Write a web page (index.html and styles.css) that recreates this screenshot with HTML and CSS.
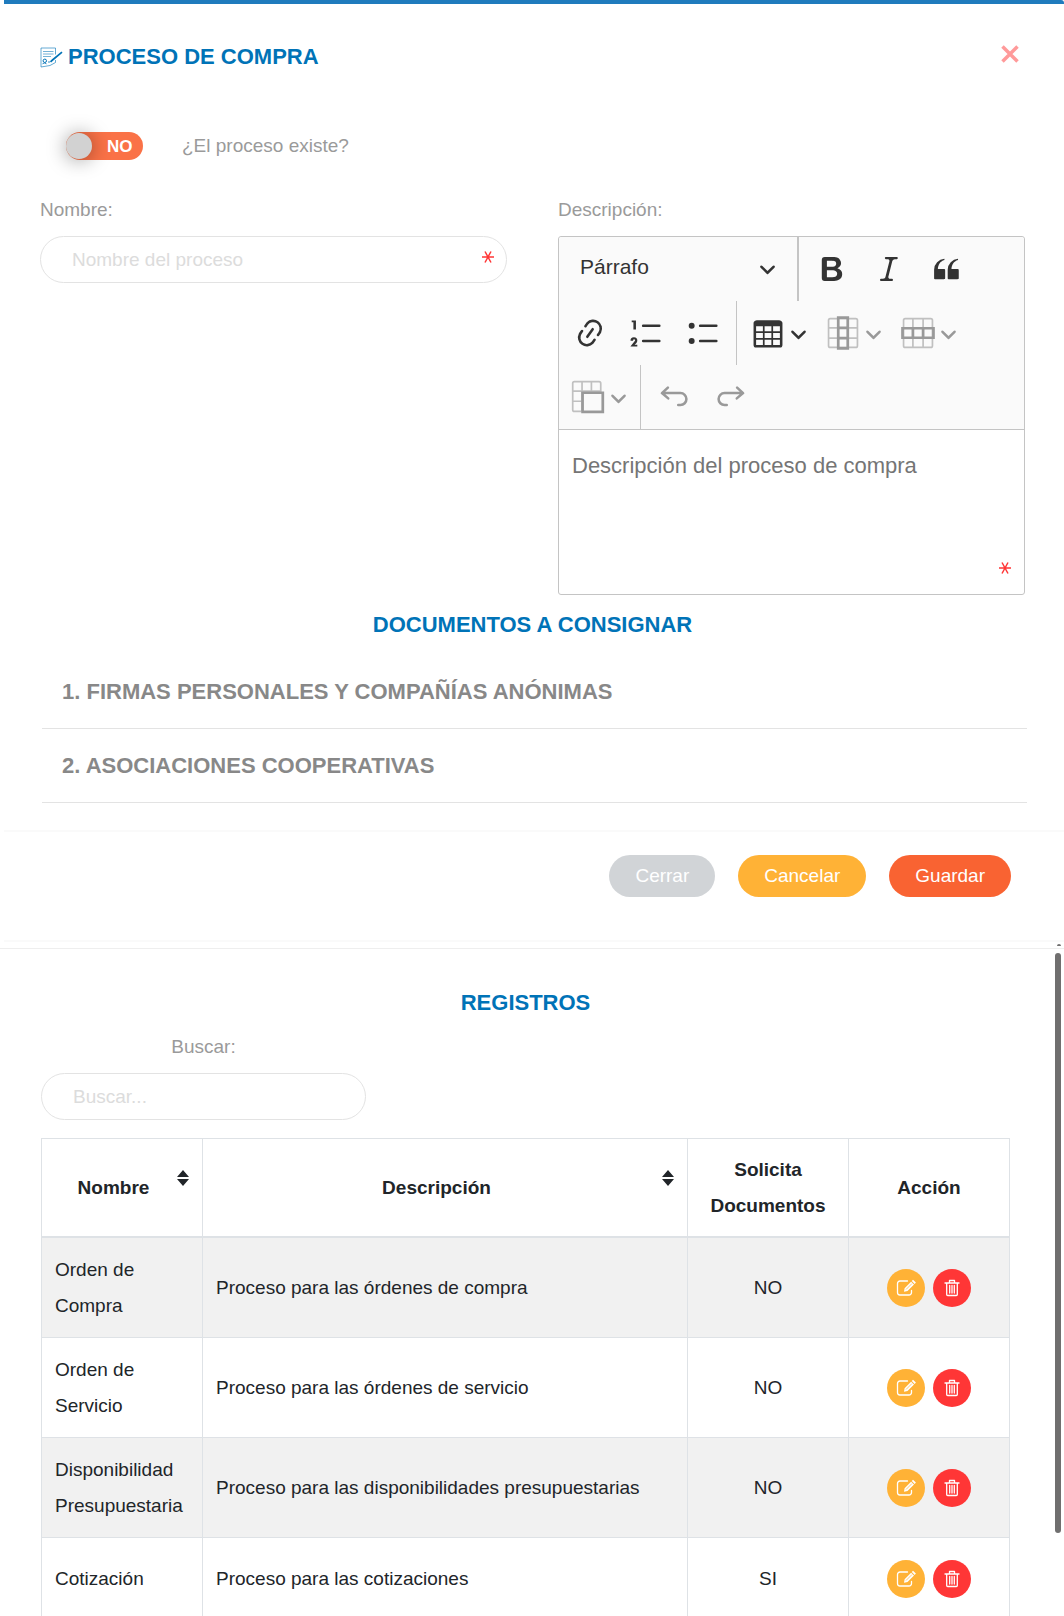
FILE: index.html
```html
<!DOCTYPE html>
<html lang="es">
<head>
<meta charset="utf-8">
<meta name="viewport" content="width=device-width, initial-scale=1">
<title>Proceso de compra</title>
<link rel="stylesheet" href="styles.css">
</head>
<body>
<svg class="sprite" aria-hidden="true">
  <symbol id="i-arrow" viewBox="0 0 10 10"><path d="M.941 4.523a.75.75 0 1 1 1.06-1.06l3.006 3.005 3.005-3.005a.75.75 0 1 1 1.06 1.06l-3.549 3.55a.75.75 0 0 1-1.168-.136L.941 4.523z"/></symbol>
  <symbol id="i-undo" viewBox="0 0 20 20"><path d="M6.4 4.5 2.900 7.700l3.700 3.100M3.200 7.700h10.600a3.500 3.500 0 0 1 0 7h-1.300" fill="none" stroke="currentColor" stroke-width="1.500" stroke-linecap="round" stroke-linejoin="round"/></symbol>
  <symbol id="i-star" viewBox="0 0 14 14"><path d="M1 7h12M4 1.5l6 11M10 1.5l-6 11" fill="none" stroke="currentColor" stroke-width="1.500"/></symbol>
  <symbol id="i-sort" viewBox="0 0 12 16"><path d="M6 0l6 7H0zM6 16l6-7H0z"/></symbol>
  <symbol id="i-edit" viewBox="0 0 20 18"><path d="M11.500 2H4a2.500 2.500 0 0 0-2.500 2.500v9A2.500 2.500 0 0 0 4 16h9a2.500 2.500 0 0 0 2.500-2.500v-2" fill="none" stroke="currentColor" stroke-width="1.300" stroke-linecap="round"/><path d="M8 12.800l.6-3.600 6.500-6.500 2.900 2.900-6.500 6.500zM15.800 2l1.200-1.200 2.900 2.800-1.200 1.300z"/><path d="M10 10.500l6-6" stroke="#ffb236" stroke-width=".7"/></symbol>
  <symbol id="i-trash" viewBox="0 0 16 18"><path d="M1 4h14M5.500 3.800V1.500h5v2.300M2.700 4v11.500a1 1 0 0 0 1 1h8.600a1 1 0 0 0 1-1V4M5.700 6.500v7.500M8 6.500v7.500M10.300 6.500v7.500" fill="none" stroke="currentColor" stroke-width="1.300" stroke-linecap="round" stroke-linejoin="round"/></symbol>
</svg>

<main class="page">
  <section class="card">
    <header class="card-head">
      <h1 class="title">
        <svg class="title-icon line" viewBox="0 0 23 21" stroke="currentColor" aria-hidden="true">
          <path d="M15.500 7.500V1H1v19l9-1.500 5.500-3V13" opacity=".6"/>
          <path d="M3 4.500h10.500M3 7h10.500M3 9.500h8" opacity=".55"/>
          <circle cx="4.800" cy="13.800" r="1.700"/><path d="M2.500 16.800l2-.8 2 .8M8 15h2" opacity=".8"/>
          <path d="M22 5.200L12.500 13l-2 1.800" stroke-width="1.700"/>
        </svg>
        PROCESO DE COMPRA
      </h1>
      <button class="close" type="button" aria-label="Cerrar ventana">
        <svg viewBox="0 0 18 18" aria-hidden="true"><path d="M1.500 1.500l15 15M16.500 1.500l-15 15" stroke="currentColor" stroke-width="3.500"/></svg>
      </button>
    </header>

    <form class="form" id="proceso">
      <div class="switch-row">
        <span class="switch"><input type="checkbox" id="existe"><span class="switch-text" aria-hidden="true">NO</span></span>
        <label for="existe">¿El proceso existe?</label>
      </div>
      <div class="columns">
        <div class="field">
          <label for="nombre">Nombre:</label>
          <div class="control">
            <input class="input" id="nombre" type="text" placeholder="Nombre del proceso">
            <svg class="required" aria-hidden="true"><use href="#i-star"/></svg>
          </div>
        </div>
        <div class="field">
          <label for="descripcion">Descripción:</label>
          <div class="control editor">
            <div class="toolbar">
              <div class="tool-row">
                <span class="style-picker">
                  <select aria-label="Estilo"><option>Párrafo</option></select>
                  <svg class="arrow" aria-hidden="true"><use href="#i-arrow"/></svg>
                </span>
                <span class="sep strong"></span>
                <button class="tool" type="button" aria-label="Negrita"><svg viewBox="0 0 20 20"><path fill-rule="evenodd" d="M10.187 17H5.773c-.637 0-1.092-.138-1.364-.415-.273-.277-.409-.718-.409-1.323V4.738c0-.617.14-1.062.419-1.332.279-.27.73-.406 1.354-.406h4.680c.69 0 1.288.041 1.793.124.506.083.96.242 1.360.478.341.197.644.447.906.75a3.262 3.262 0 0 1 .808 2.162c0 1.401-.722 2.426-2.167 3.075C15.050 10.175 16 11.315 16 13.010a3.756 3.756 0 0 1-2.296 3.504 6.100 6.100 0 0 1-1.517.377c-.571.073-1.238.11-2 .11zm-.217-6.217H7v4.087h3.069c1.977 0 2.965-.69 2.965-2.072 0-.707-.256-1.220-.768-1.537-.512-.319-1.277-.478-2.296-.478zM7 5.130v3.619h2.606c.729 0 1.292-.067 1.690-.2a1.600 1.600 0 0 0 .910-.765c.165-.267.247-.566.247-.897 0-.707-.260-1.176-.778-1.409-.519-.232-1.310-.348-2.375-.348H7z"/></svg></button>
                <button class="tool" type="button" aria-label="Cursiva"><svg viewBox="0 0 20 20"><path d="m9.586 14.633.021.004c-.036.335.095.655.393.962.082.083.173.15.274.201h1.474a.6.6 0 1 1 0 1.200H5.304a.6.6 0 0 1 0-1.200h1.150c.474-.07.809-.182 1.005-.334.157-.122.291-.32.404-.597l2.416-9.550a1.053 1.053 0 0 0-.281-.823 1.120 1.120 0 0 0-.442-.296H8.150a.6.6 0 0 1 0-1.200h6.443a.6.6 0 1 1 0 1.200h-1.195c-.376.056-.65.155-.823.296-.215.175-.423.439-.623.79l-2.366 9.347z"/></svg></button>
                <button class="tool" type="button" aria-label="Cita"><svg viewBox="0 0 20 20"><path d="M3 10.423a6.500 6.500 0 0 1 6.056-6.408l.038.67C6.448 5.423 5.354 7.663 5.220 10H9c.552 0 .5.432.5.986v4.511c0 .554-.448.503-1 .503h-5c-.552 0-.5-.449-.5-1.003v-4.574zm8 0a6.500 6.500 0 0 1 6.056-6.408l.038.67c-2.646.739-3.740 2.979-3.873 5.315H17c.552 0 .5.432.5.986v4.511c0 .554-.448.503-1 .503h-5c-.552 0-.5-.449-.5-1.003v-4.574z"/></svg></button>
              </div>
              <div class="tool-row">
                <button class="tool" type="button" aria-label="Enlace"><svg viewBox="0 0 20 20"><path d="m11.077 15 .991-1.416a.75.75 0 1 1 1.229.86l-1.148 1.640a.748.748 0 0 1-.217.206 5.251 5.251 0 0 1-8.503-5.955.741.741 0 0 1 .12-.274l1.147-1.639a.75.75 0 1 1 1.228.86L4.933 10.700l.006.003a3.750 3.750 0 0 0 6.132 4.294l.006.004zm5.494-5.335a.748.748 0 0 1-.12.274l-1.147 1.639a.75.75 0 1 1-1.228-.86l.86-1.230a3.750 3.750 0 0 0-6.144-4.301l-.86 1.229a.75.75 0 0 1-1.229-.86l1.148-1.640a.748.748 0 0 1 .217-.206 5.251 5.251 0 0 1 8.503 5.955zm-4.563-2.532a.75.75 0 0 1 .184 1.045l-3.155 4.505a.75.75 0 1 1-1.229-.86l3.155-4.506a.75.75 0 0 1 1.045-.184z"/></svg></button>
                <button class="tool" type="button" aria-label="Lista numerada"><svg viewBox="0 0 20 20"><path d="M7 5.750c0 .414.336.75.75.75h9.500a.75.75 0 1 0 0-1.500h-9.500a.75.75 0 0 0-.75.75zM3.500 3v5H2V3.700H1v-1h2.500V3zM.343 17.857l2.590-3.257H2.920a.6.6 0 1 0-1.040 0H.302a2 2 0 1 1 3.995 0h-.001c-.048.405-.16.734-.333.988-.175.254-.59.692-1.244 1.312H4.300v1h-4l.043-.043zM7 14.750a.75.75 0 0 1 .75-.75h9.500a.75.75 0 1 1 0 1.500h-9.500a.75.75 0 0 1-.75-.75z"/></svg></button>
                <button class="tool" type="button" aria-label="Lista de puntos"><svg viewBox="0 0 20 20"><path d="M7 5.750c0 .414.336.75.75.75h9.500a.75.75 0 1 0 0-1.500h-9.500a.75.75 0 0 0-.75.75zM7 14.750c0 .414.336.75.75.75h9.500a.75.75 0 1 0 0-1.500h-9.500a.75.75 0 0 0-.75.75z"/><circle cx="2.750" cy="5.750" r="1.750"/><circle cx="2.750" cy="14.750" r="1.750"/></svg></button>
                <span class="sep"></span>
                <button class="tool drop" type="button" aria-label="Tabla"><svg viewBox="0 0 20 20"><path fill-rule="evenodd" d="M3 6v3h4V6H3zm0 4v3h4v-3H3zm0 4v3h4v-3H3zm5 3h4v-3H8v3zm5 0h4v-3h-4v3zm4-4v-3h-4v3h4zm0-4V6h-4v3h4zm1.500 8a1.500 1.500 0 0 1-1.500 1.500H3A1.500 1.500 0 0 1 1.500 17V4c.222-.863 1.068-1.500 2-1.500h13c.932 0 1.778.637 2 1.500v13zM12 13v-3H8v3h4zm0-4V6H8v3h4z"/></svg><svg class="arrow"><use href="#i-arrow"/></svg></button>
                <button class="tool drop" type="button" aria-label="Columna" disabled><svg class="line" viewBox="0 0 20 20" stroke="currentColor"><path d="M2.500 1.500h15q1 0 1 1v15q0 1-1 1h-15q-1 0-1-1v-15q0-1 1-1zM1.500 7h17M1.500 13h17" opacity=".6"/><path d="M7.200.9h5.600v18.200H7.200zM7 7h6M7 13h6" stroke-width="1.600"/></svg><svg class="arrow"><use href="#i-arrow"/></svg></button>
                <button class="tool drop" type="button" aria-label="Fila" disabled><svg class="line" viewBox="0 0 20 20" stroke="currentColor"><path d="M2.500 1.500h15q1 0 1 1v15q0 1-1 1h-15q-1 0-1-1v-15q0-1 1-1zM7 1.500v17M13 1.500v17" opacity=".6"/><path d="M.9 7.200h18.200v5.600H.9zM7 7v6M13 7v6" stroke-width="1.600"/></svg><svg class="arrow"><use href="#i-arrow"/></svg></button>
              </div>
              <div class="tool-row">
                <button class="tool drop" type="button" aria-label="Combinar celdas" disabled><svg class="line" viewBox="0 0 20 20" stroke="currentColor"><path d="M6 18.500H2q-1 0-1-1V2q0-1 1-1h14.500q1 0 1 1v5M6.500 1v17.500M12 1v6M1 6.500h16.500M1 12.500h5.500" opacity=".6"/><path d="M6.800 7.500h11.900v11.300H6.800z" stroke-width="1.600"/></svg><svg class="arrow"><use href="#i-arrow"/></svg></button>
                <span class="sep"></span>
                <button class="tool" type="button" aria-label="Deshacer" disabled><svg><use href="#i-undo"/></svg></button>
                <button class="tool mirrored" type="button" aria-label="Rehacer" disabled><svg><use href="#i-undo"/></svg></button>
              </div>
            </div>
            <textarea id="descripcion" placeholder="Descripción del proceso de compra"></textarea>
            <svg class="required" aria-hidden="true"><use href="#i-star"/></svg>
          </div>
        </div>
      </div>

      <h2 class="heading">DOCUMENTOS A CONSIGNAR</h2>
      <div class="accordion">
        <button type="button">1. FIRMAS PERSONALES Y COMPAÑÍAS ANÓNIMAS</button>
        <button type="button">2. ASOCIACIONES COOPERATIVAS</button>
      </div>
    </form>

    <footer class="actions">
      <button class="btn grey" type="button">Cerrar</button>
      <button class="btn amber" type="reset" form="proceso">Cancelar</button>
      <button class="btn orange" type="submit" form="proceso">Guardar</button>
    </footer>
  </section>

  <section class="records">
    <h2 class="heading">REGISTROS</h2>
    <div class="search">
      <label for="buscar">Buscar:</label>
      <input class="input" id="buscar" type="text" placeholder="Buscar...">
    </div>
    <table class="table">
      <colgroup><col class="narrow"><col><col class="narrow"><col class="narrow"></colgroup>
      <thead>
        <tr>
          <th><div class="sortable"><span>Nombre</span><svg aria-hidden="true"><use href="#i-sort"/></svg></div></th>
          <th><div class="sortable"><span>Descripción</span><svg aria-hidden="true"><use href="#i-sort"/></svg></div></th>
          <th>Solicita Documentos</th>
          <th>Acción</th>
        </tr>
      </thead>
      <tbody>
        <tr><td>Orden de Compra</td><td>Proceso para las órdenes de compra</td><td>NO</td>
          <td><div class="row-actions"><button class="round amber" type="button" aria-label="Editar"><svg><use href="#i-edit"/></svg></button><button class="round red" type="button" aria-label="Eliminar"><svg><use href="#i-trash"/></svg></button></div></td></tr>
        <tr><td>Orden de Servicio</td><td>Proceso para las órdenes de servicio</td><td>NO</td>
          <td><div class="row-actions"><button class="round amber" type="button" aria-label="Editar"><svg><use href="#i-edit"/></svg></button><button class="round red" type="button" aria-label="Eliminar"><svg><use href="#i-trash"/></svg></button></div></td></tr>
        <tr><td>Disponibilidad Presupuestaria</td><td>Proceso para las disponibilidades presupuestarias</td><td>NO</td>
          <td><div class="row-actions"><button class="round amber" type="button" aria-label="Editar"><svg><use href="#i-edit"/></svg></button><button class="round red" type="button" aria-label="Eliminar"><svg><use href="#i-trash"/></svg></button></div></td></tr>
        <tr><td>Cotización</td><td>Proceso para las cotizaciones</td><td>SI</td>
          <td><div class="row-actions"><button class="round amber" type="button" aria-label="Editar"><svg><use href="#i-edit"/></svg></button><button class="round red" type="button" aria-label="Eliminar"><svg><use href="#i-trash"/></svg></button></div></td></tr>
      </tbody>
    </table>
    <span class="scroll-thumb" aria-hidden="true"></span>
  </section>
</main>
</body>
</html>
```
FILE: styles.css
```css
* { box-sizing: border-box; }

body {
  margin: 0;
  background: #fff;
  color: #212529;
  font: 19px/36px "Liberation Sans", Arial, sans-serif;
}

button, input, select, textarea { font: inherit; color: inherit; }
button { border: 0; padding: 0; background: none; cursor: pointer; }
svg { display: block; fill: currentColor; }
svg.line { fill: none; }
.sprite { position: absolute; width: 0; height: 0; }
label { color: #9a9a9a; }

.page { display: flex; flex-direction: column; height: 100vh; }

/* Card with the form */
.card {
  position: relative;
  flex: none;
  margin: 0 0 6px 4px;
  border-top: 4px solid #1f7bbd;
  border-bottom: 2px solid #fafafa;
  border-radius: 0 3px 0 0;
}
/* End of the card's own scroll thumb */
.card::after {
  content: "";
  position: absolute;
  right: 3px;
  bottom: -6px;
  width: 4px;
  height: 2px;
  border-radius: 2px 2px 0 0;
  background: #706f6f;
}
.card-head {
  display: flex;
  justify-content: space-between;
  align-items: center;
  padding: 35px 45px 0 36px;
}
.title, .heading {
  margin: 0;
  color: #0073b7;
  font-size: 22px;
  line-height: 36px;
  font-weight: bold;
}
.title { display: flex; align-items: center; gap: 5px; }
.title-icon { width: 23px; height: 21px; }
.heading { text-align: center; }
.close { color: #ff9a9a; margin-bottom: 6px; }
.close svg { width: 18px; height: 18px; }

.form { padding: 53px 39px 27px 36px; }
.switch-row { display: flex; align-items: center; gap: 39px; padding-left: 26px; }
.switch {
  position: relative;
  display: flex;
  width: 77px;
  height: 28px;
  border-radius: 14px;
  background: #fa7247;
}
.switch input {
  appearance: none;
  width: 26px;
  height: 26px;
  margin: 1px 0 0;
  border-radius: 50%;
  background: #d2d2d2;
  box-shadow: 0 1px 20px rgba(0, 0, 0, .4);
}
.switch-text {
  flex: 1;
  padding-left: 15px;
  color: #fff;
  font-size: 17px;
  line-height: 30px;
  font-weight: bold;
}

.columns { display: grid; grid-template-columns: 1fr 1fr; gap: 51px; padding-top: 28px; }
.field label { display: block; }
.control { position: relative; margin-top: 8px; }
.input {
  display: block;
  width: 100%;
  height: 47px;
  padding: 0 31px;
  border: 1px solid #e3e3e3;
  border-radius: 24px;
  background: none;
}
.input::placeholder { color: #dcdcdc; opacity: 1; }
.required {
  position: absolute;
  right: 12px;
  top: 14px;
  width: 14px;
  height: 14px;
  color: #ff3636;
}

/* Rich text editor */
.editor { border: 1px solid #c4c4c4; border-radius: 3px; color: #333; }
.editor .required { top: auto; bottom: 19px; }
.toolbar { background: #fafafa; border-bottom: 1px solid #c4c4c4; padding-left: 2px; border-radius: 3px 3px 0 0; }
.tool-row { display: flex; height: 64px; }
.tool {
  display: flex;
  align-items: center;
  justify-content: center;
  width: 57px;
}
.tool svg { width: 34px; height: 34px; }
.tool:disabled { color: #999; }
.tool.drop { width: 75px; gap: 5px; }
.tool.mirrored svg { transform: scaleX(-1); }
.tool .arrow, .arrow { width: 17px; height: 17px; }
.sep { width: 1px; margin: 0 4px; background: #c4c4c4; }
.sep.strong { width: 2px; }
.style-picker { position: relative; flex: 0 1 232px; display: flex; }
.style-picker select {
  appearance: none;
  width: 100%;
  padding: 0 16px 4px 19px;
  border: 0;
  background: none;
  font-size: 21px;
}
.style-picker .arrow { position: absolute; right: 17px; top: 23px; pointer-events: none; }
.editor textarea {
  display: block;
  width: 100%;
  height: 164px;
  padding: 18px 13px;
  border: 0;
  background: none;
  resize: none;
  font-size: 22px;
}
.editor textarea::placeholder { color: #757575; opacity: 1; }

.form .heading { padding-top: 12px; }
.accordion { display: flex; flex-direction: column; margin: 0 -2px 0 2px; padding-top: 12px; }
.accordion button {
  height: 74px;
  padding: 0 20px;
  border-bottom: 1px solid #e3e3e3;
  color: #888;
  font-size: 22px;
  font-weight: bold;
  text-align: left;
}

.actions {
  display: flex;
  justify-content: flex-end;
  gap: 23px;
  padding: 23px 53px 43px;
  border-top: 2px solid #fafafa;
}
.btn { padding: 3px 26px; border-radius: 21px; color: #fff; }
.grey { background: #d1d4d7; }
.amber { background: #ffb236; }
.orange { background: #f96332; }
.red { background: #ff3636; }

/* Saved records */
.records {
  position: relative;
  flex: 1;
  min-height: 0;
  overflow: hidden;
  padding: 36px 54px 0 41px;
  border-top: 1px solid #eee;
}
.search { width: 325px; padding: 8px 0 18px; }
.search label { display: block; padding-bottom: 8px; text-align: center; }

.table { width: 100%; table-layout: fixed; border-collapse: collapse; }
.narrow { width: 161px; }
.table th, .table td {
  height: 82px;
  padding: 14px 13px 13px;
  border: 1px solid #dee2e6;
}
.table thead th { padding: 13px 13px 12px; border-bottom-width: 2px; }
.table tbody tr:nth-child(odd) { background: #f1f1f1; }
.table td:nth-child(3) { text-align: center; }
.sortable { display: flex; gap: 5px; }
.sortable span { flex: 1; }
.sortable svg { width: 12px; height: 16px; }
.row-actions { display: flex; justify-content: center; gap: 8px; }
.round {
  display: flex;
  align-items: center;
  justify-content: center;
  width: 38px;
  height: 38px;
  border-radius: 50%;
  color: #fff;
}
.round svg { width: 20px; height: 18px; }

.scroll-thumb {
  position: absolute;
  top: 4px;
  right: 3px;
  width: 6px;
  height: 87%;
  border-radius: 3px;
  background: #706f6f;
}
```
